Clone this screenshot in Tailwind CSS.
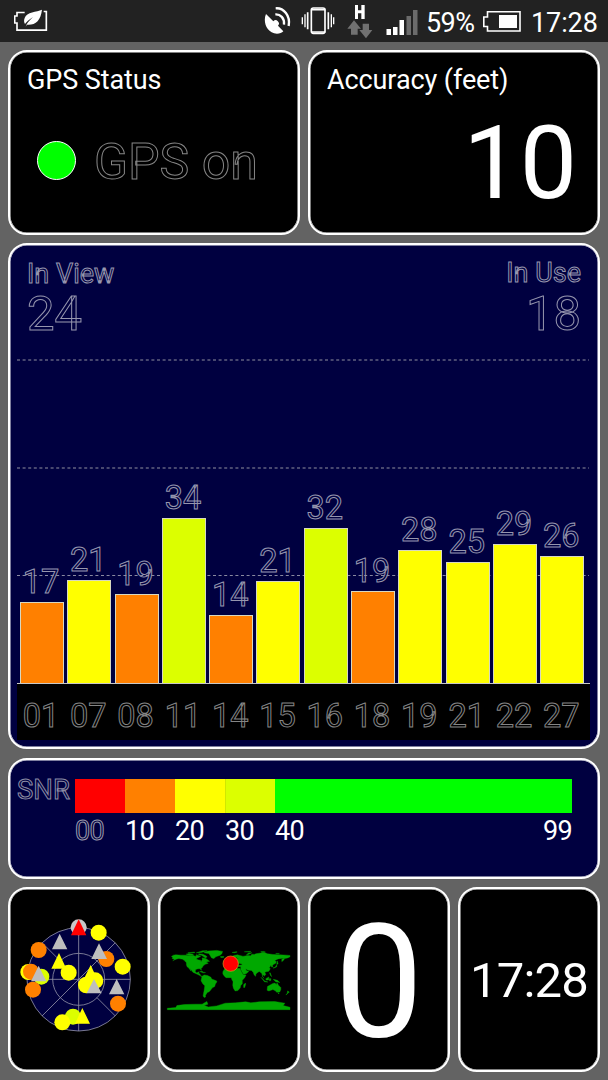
<!DOCTYPE html>
<html lang="en">
<head>
<meta charset="utf-8">
<title>GPS Status</title>
<script src="https://cdn.jsdelivr.net/npm/@tailwindcss/browser@4"></script>
</head>
<body class="w-[608px] h-[1080px] overflow-hidden bg-[#636363] text-white font-['Roboto',sans-serif] flex flex-col">
<header class="h-[42px] shrink-0 bg-[#222222] flex items-start">
  <svg class="ml-[14px] mt-2 w-[34px] h-6" viewBox="0 0 102 72" fill="none">
    <path d="M32 12.500H9V23H2V44H9V65.500H97V9.500H89" transform="translate(0 1)" stroke="#fff" stroke-width="5"/>
    <path d="M84 5C68 12 38 11 32 30C29 38 30 43 33 48C37 43 45 35 57 27C48 37 39 43 35 56L39 50C64 52 80 38 84 5Z" fill="#fff"/>
  </svg>
  <svg class="ml-[215px] mt-1.5 w-[30px] h-[30px]" viewBox="0 0 90 90" fill="none">
    <path d="M9 24C-1 46 10 82 42 83C50 83 57 80 61 76L45 59A9 9 0 1 0 31 46Z" fill="#fff"/>
    <path d="M38 7C62 5 83 29 77 60" stroke="#fff" stroke-width="7"/>
    <path d="M37 25C52 24 65 36 63 56" stroke="#fff" stroke-width="7"/>
  </svg>
  <svg class="ml-[8px] mt-1.5 w-[34px] h-[30px]" viewBox="0 0 102 90" fill="none" stroke="#fff">
    <rect x="31" y="6" width="41" height="76" rx="6" stroke-width="5"/>
    <path d="M30 11H73M30 78H73" stroke-width="5"/>
    <path d="M20 19V70M82 19V70" stroke-width="5"/>
    <path d="M4 34V55M98 34V55M12 25V64M91 25V64" stroke-width="4"/>
  </svg>
  <svg class="ml-[12px] mt-1 w-[26px] h-[35px]" viewBox="0 0 78 105">
    <path d="M24 3H33V19H43V3H53V45H43V28H33V45H24Z" fill="#fff"/>
    <path d="M21 49L42 74H32V92H12V74H1Z M47 59H66V78H76L57 103L37 78H47Z" fill="#717171"/>
  </svg>
  <svg class="ml-[13px] mt-[9px] w-8 h-[27px]" viewBox="0 0 32 27">
    <path d="M0.500 20H5V26H0.500ZM7 18H11.500V26H7ZM13.500 11H18V26H13.500Z" fill="#fff"/>
    <path d="M20.500 7H25V26H20.500ZM27 1H31.500V26H27Z" fill="#6b6b6b"/>
  </svg>
  <span class="ml-[8px] mt-[9px] text-[27px] leading-[28px] tracking-[-0.6px] w-[50px]">59%</span>
  <svg class="ml-[6px] mt-2.5 w-[40px] h-[23px]" viewBox="0 0 40 23" fill="none">
    <path d="M5.500 1.800H38V21H5.500V16.500H1.800V7H5.500Z" stroke="#fff" stroke-width="1.600"/>
    <path d="M17 5H35V18H17Z" fill="#fff"/>
  </svg>
  <span class="ml-[9px] mt-[9px] text-[27px] leading-[28px] tracking-[-0.1px]">17:28</span>
</header>

<main class="flex-1 p-2 flex flex-col gap-2">
  <div class="h-[185px] shrink-0 grid grid-cols-2 gap-2">
    <section class="rounded-[19px] border-2 border-white shadow-[inset_0_0_0_0.5px_#fff] bg-black pl-[17px] pt-[13px]">
      <h2 class="text-[27px] leading-[30px] tracking-[-0.1px]">GPS Status</h2>
      <div class="mt-[34px] flex items-center gap-[19px] pl-[10px]">
        <span class="size-[39px] rounded-full border border-white bg-[#00ff00]"></span>
        <span class="mt-[3px] -ml-px text-[50px] leading-[60px] text-transparent [-webkit-text-stroke:1px_#858585]">GPS on</span>
      </div>
    </section>
    <section class="rounded-[19px] border-2 border-white shadow-[inset_0_0_0_0.5px_#fff] bg-black pl-[17px] pr-[20px] pt-[13px]">
      <h2 class="text-[27px] leading-[30px] tracking-[-0.1px]">Accuracy (feet)</h2>
      <div class="mt-[13px] text-right text-[102px] leading-[110px] tracking-[-1px] pr-[2px]">10</div>
    </section>
  </div>

  <section class="h-[506px] shrink-0 rounded-[19px] border-2 border-white shadow-[inset_0_0_0_0.5px_#fff] bg-[#000040] px-[7px] relative">
    <div class="flex justify-between px-[10px] pt-[13px] h-[92px] text-transparent [-webkit-text-stroke:1px_#9696ae]">
      <div><div class="text-[27px] leading-[32px]">In View</div><div class="text-[49px] leading-[48px]">24</div></div>
      <div class="text-right"><div class="text-[27px] leading-[32px] -mt-px">In Use</div><div class="text-[49px] leading-[48px] mt-px">18</div></div>
    </div>
    <svg class="absolute left-[7px] top-[113px] w-[573px] h-[220px]" viewBox="0 0 573 220" stroke="#60607f" stroke-dasharray="3 2.600" fill="none">
      <path d="M0 2H572M0 110H572" stroke-width="1.600"/><path d="M0 217.500H572" stroke="#8a8aa0" stroke-width="1"/>
    </svg>
    <div id="bars" class="relative h-[346px] flex items-end gap-[3.300px] pl-[3px]"></div>
    <div id="ids" class="relative w-[573px] h-[57px] bg-black border-t border-[#c8c8c8] flex gap-[3.300px] pl-[3px] pt-[12px] text-[32.500px] leading-[40px] text-transparent [-webkit-text-stroke:1px_#858585]"></div>
  </section>

  <section class="mt-[0.500px] h-[121px] shrink-0 rounded-[19px] border-2 border-white shadow-[inset_0_0_0_0.5px_#fff] bg-[#000040] pl-[7px] pt-[19px] flex">
    <div class="w-[58px] text-[27.500px] leading-[22px] text-transparent [-webkit-text-stroke:1px_#8c8ca4]">SNR</div>
    <div class="w-[497px]">
      <div class="flex h-[34px]">
        <i class="w-[50px] bg-[#ff0000]"></i><i class="w-[50px] bg-[#ff8000]"></i><i class="w-[50px] bg-[#ffff00]"></i><i class="w-[50px] bg-[#dcff00] border-l border-[#d0e800]"></i><i class="flex-1 bg-[#00ff00]"></i>
      </div>
      <div class="flex text-[27px] leading-[30px] mt-[3px] tracking-[-0.7px]">
        <span class="w-[50px] text-transparent [-webkit-text-stroke:1px_#9c9cac]">00</span><span class="w-[50px]">10</span><span class="w-[50px]">20</span><span class="w-[50px]">30</span><span class="flex-1">40</span><span>99</span>
      </div>
    </div>
  </section>

  <div class="h-[185px] shrink-0 grid grid-cols-4 grid-rows-[185px] gap-2">
    <section class="rounded-[19px] border-2 border-white shadow-[inset_0_0_0_0.5px_#fff] bg-black pl-px">
      <svg class="shrink-0 w-[140px] h-[130px] mt-[21px] ml-[-1px]" viewBox="0 0 420 390">
        <circle cx="206" cy="208" r="155" fill="#000040"/>
        <g fill="none" stroke="#8f8fa5" stroke-width="2.500"><circle cx="206" cy="208" r="155"/><circle cx="206" cy="208" r="78"/><path d="M206 53V363M51 208H361M96 98L151 153M261 263L316 318M96 318L316 98"/></g>
        <g fill="#ffff00"><circle cx="55" cy="186" r="24"/><circle cx="266" cy="68" r="24"/><circle cx="338" cy="170" r="24"/><circle cx="176" cy="188" r="24"/><circle cx="229" cy="225" r="25"/><circle cx="255" cy="212" r="25"/></g>
        <circle cx="94" cy="200" r="24" fill="#dcff00"/><circle cx="189" cy="320" r="24" fill="#dcff00"/><circle cx="157" cy="337" r="24" fill="#ffff00"/>
        <g fill="#ff8000"><circle cx="86" cy="120" r="24"/><circle cx="63" cy="185" r="24"/><circle cx="69" cy="239" r="24"/><circle cx="289" cy="147" r="24"/><circle cx="324" cy="281" r="24"/></g>
        <circle cx="206" cy="52" r="24" fill="#c8c8c8"/>
        <path d="M147 129L169 176H124ZM242 165L264 212H219ZM217 294L240 341H195Z" fill="#ffff00"/>
        <path d="M149 71L172 118H126ZM267 100L291 147H244ZM86 167L109 214H63ZM252 207L275 250H230ZM320 207L343 253H297Z" fill="#bebebe"/>
        <path d="M206 28L229 76H183Z" fill="#ff0000"/>
      </svg>
    </section>
    <section class="rounded-[19px] border-2 border-white shadow-[inset_0_0_0_0.5px_#fff] bg-black overflow-hidden">
      <svg class="w-[150px] h-[90px] ml-[-5px] mt-[46px]" viewBox="0 0 450 270">
        <g transform="translate(221 132) scale(1.022 -1.022)" fill="#00a800" stroke="#00a800" stroke-width="1.200">
          <path d="M-168 66L-162 70L-155 71L-140 70L-125 70L-115 68L-108 68L-96 67L-94 72L-90 69L-86 68L-82 67L-87 64L-94 61L-94 58L-88 56L-82 55L-82 52L-79 52L-79 55L-77 57L-78 62L-70 61L-65 59L-61 56L-56 52L-66 50L-60 46L-66 44L-70 43L-71 41L-76 38L-76 35L-81 31L-80 26L-82 27L-83 30L-90 30L-97 28L-98 22L-95 18L-91 19L-87 21L-88 16L-84 15L-83 10L-78 8L-80 7L-86 11L-92 14L-97 16L-105 20L-109 26L-114 31L-112 27L-110 23L-117 32L-122 36L-124 42L-124 48L-130 54L-135 58L-146 60L-152 59L-164 54L-158 58L-166 60L-164 64Z"/>
          <path d="M-73 78L-60 82L-35 84L-18 81L-20 74L-25 70L-38 65L-43 60L-50 62L-54 68L-58 75L-68 76ZM-125 73L-116 75L-105 73L-102 69L-115 69ZM-88 74L-76 73L-68 69L-63 65L-68 62L-73 65L-80 70L-88 71ZM-95 77L-76 83L-63 83L-80 78ZM-120 77L-100 79L-100 77ZM-24 66L-14 66L-15 63L-23 63Z"/>
          <path d="M-78 8L-72 12L-62 10L-52 5L-50 0L-44 -2L-35 -6L-35 -9L-39 -15L-41 -22L-48 -26L-54 -34L-58 -38L-62 -39L-65 -43L-68 -48L-68 -53L-72 -54L-75 -50L-74 -43L-72 -34L-70 -20L-76 -14L-81 -5L-80 0ZM-85 22L-78 23L-74 20L-68 19L-75 18Z"/>
          <path d="M-17 15L-17 21L-13 28L-9 33L-5 36L10 37L11 33L20 32L33 31L37 22L43 12L51 12L47 4L40 -4L40 -14L35 -20L34 -26L27 -34L19 -35L14 -27L12 -18L13 -8L9 -1L8 4L-8 4L-13 9ZM44 -25L47 -25L50 -15L49 -12L44 -17Z"/>
          <path d="M-9 37L-9 43L-2 43L-2 48L4 50L8 54L9 57L14 54L23 55L24 59L30 60L22 61L25 65L18 62L17 57L13 56L11 59L5 59L6 63L15 69L26 71L40 67L34 66L45 67L55 69L65 68L68 73L75 72L80 74L104 78L114 74L130 72L150 71L170 70L180 69L180 65L173 62L164 60L162 56L156 51L156 58L163 62L145 59L135 54L140 51L138 46L132 43L129 40L129 35L126 35L125 39L121 39L122 36L119 34L122 30L118 23L110 21L106 20L109 13L105 9L100 13L99 8L104 2L100 6L97 17L90 22L86 20L80 15L79 8L75 12L72 20L67 25L57 26L50 30L52 25L59 22L52 16L44 13L39 21L35 29L36 36L27 37L27 40L40 41L37 45L30 46L28 42L23 36L20 40L13 45L18 40L14 38L10 44L0 38Z"/>
          <path d="M-6 50L1 51L0 54L-3 59L-6 56ZM-10 52L-6 52L-6 55L-10 54ZM10 78L22 80L25 79L17 77ZM46 80L65 81L62 79ZM52 71L58 76L68 77L58 72ZM94 80L102 81L108 79L98 78ZM138 75L149 75L147 74ZM130 32L137 35L141 42L141 36L135 33ZM141 43L145 44L143 53Z"/>
          <path d="M114 -22L113 -33L118 -35L130 -31L138 -35L141 -39L150 -38L153 -31L153 -25L146 -18L142 -11L140 -17L136 -12L130 -13L123 -17ZM95 5L106 -6L115 -9L105 -8ZM109 1L118 6L117 -3L110 -3ZM119 1L124 1L123 -5L120 -5ZM131 -1L143 -4L150 -10L138 -8ZM120 18L123 10L126 7L122 18ZM173 -35L178 -38L175 -41L168 -47L172 -42ZM145 -41L148 -41L147 -44Z"/>
          <path d="M-180 -86L-155 -84L-152 -78L-130 -75L-100 -74L-78 -74L-64 -66L-61 -74L-72 -77L-60 -82L-35 -79L-10 -71L20 -70L50 -67L65 -70L90 -67L135 -66L165 -71L160 -78L180 -83V-90H-180Z"/>
        </g>
        <circle cx="227" cy="86" r="23" fill="#ff0000" stroke="#d8a020" stroke-width="2"/>
      </svg>
    </section>
    <section class="rounded-[19px] border-2 border-white shadow-[inset_0_0_0_0.5px_#fff] bg-black flex justify-center overflow-hidden">
      <span class="text-[158px] leading-[186px]">0</span>
    </section>
    <section class="rounded-[19px] border-2 border-white shadow-[inset_0_0_0_0.5px_#fff] bg-black flex justify-center overflow-hidden">
      <span class="text-[49px] leading-[184px] tracking-[-0.8px]">17:28</span>
    </section>
  </div>
</main>
<script>
const satellites = [
  ['01',17,81.5,'o'],['07',21,104,'y'],['08',19,90,'o'],['11',34,165.500,'l'],['14',14,69,'o'],['15',21,102.500,'y'],
  ['16',32,156,'l'],['18',19,93,'o'],['19',28,134,'y'],['21',25,121.500,'y'],['22',29,139.500,'y'],['27',26,127.500,'y']
];
const fill = { o: 'bg-[#ff8000]', y: 'bg-[#ffff00]', l: 'bg-[#dcff00]' };
document.getElementById('bars').innerHTML = satellites.map(([id, snr, h, c]) =>
  `<div class="w-[44px] shrink-0"><div class="text-center pr-[2px] text-[32.5px] leading-[40px] text-transparent [-webkit-text-stroke:1px_#9696ae]">${snr}</div><div class="border border-b-0 border-[#d8d8c0] ${fill[c]}" style="height:${h - 0.5}px"></div></div>`).join('');
document.getElementById('ids').innerHTML = satellites.map(([id]) =>
  `<div class="w-[44px] shrink-0 text-center pr-[2px]">${id}</div>`).join('');
</script>
</body>
</html>
